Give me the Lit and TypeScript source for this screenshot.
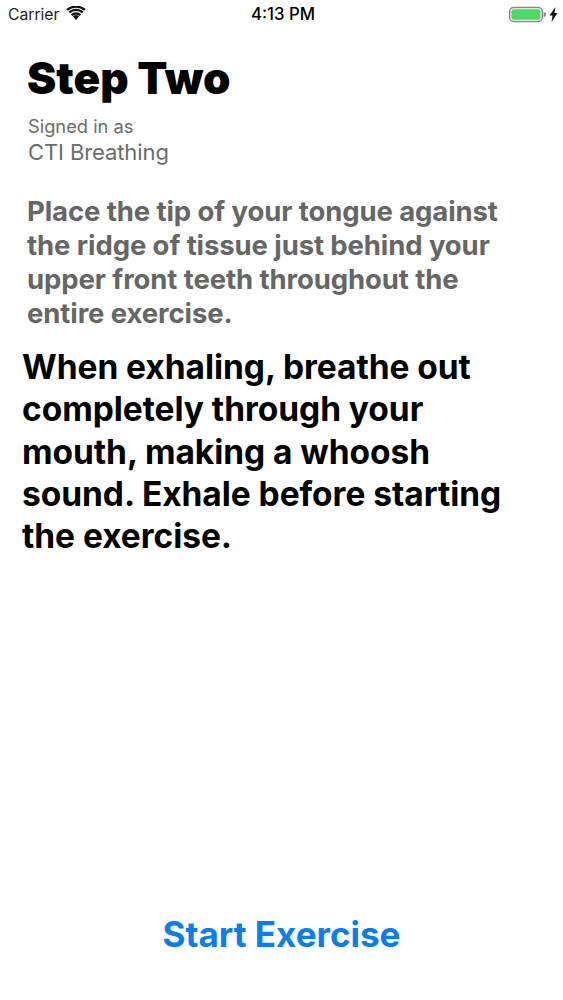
import { LitElement, html, css } from "lit";
import { customElement } from "lit/decorators.js";

@customElement("app-root")
export class AppRoot extends LitElement {
  static styles = css`
    :host { display: block; width: 563px; height: 1000px; background: #fff; font-family: Inter, "Liberation Sans", sans-serif; color: #000; overflow: hidden; }
    .page { height: 1000px; display: flex; flex-direction: column; box-sizing: border-box; }
    .status { height: 28px; display: grid; grid-template-columns: 1fr auto 1fr; align-items: center; padding: 0 5px 0 8px; font-size: 15.700px; }
    .left { display: flex; align-items: center; gap: 7px; color: #222; }
    .time { font-weight: 500; font-size: 16.800px; }
    .right { display: flex; justify-content: flex-end; align-items: center; gap: 3px; }
    .wifi { margin-top: -2px; }
    .content { padding: 0 22px; flex: 1; display: flex; flex-direction: column; }
    h1 { margin: 25px 0 0 5px; font-size: 44px; line-height: 50px; font-weight: 900; letter-spacing: 0; }
    .signed { margin: 12px 0 0 6px; font-size: 18.300px; line-height: 22px; color: #6c6c6c; font-weight: 400; }
    .name { margin: 1px 0 0 6px; font-size: 22px; line-height: 28px; color: #6c6c6c; letter-spacing: -0.1px; }
    .grey { margin: 28px 0 0 5px; font-size: 27.500px; line-height: 34px; font-weight: 700; color: #666; letter-spacing: -0.1px; }
    .black { margin: 16px 0 0 0; font-size: 33.500px; line-height: 42.250px; font-weight: 700; letter-spacing: -0.05px; }
    .start { text-align: center; color: #0a7df2; font-size: 35px; line-height: 44px; font-weight: 700; margin-bottom: 44px; }
    .spacer { flex: 1; }
  `;
  render() {
    return html`<div class="page">
      <div class="status">
        <div class="left"><span>Carrier</span>
          <svg class="wifi" width="20" height="15" viewBox="0 0 20 15"><path d="M10 14l3-3.600a4.600 4.600 0 0 0-6 0zM4.800 8.200l1.500 1.800a5.800 5.800 0 0 1 7.400 0l1.500-1.800a8 8 0 0 0-10.400 0zM2.500 5.500l1.500 1.700a9.400 9.400 0 0 1 12 0l1.500-1.700a11.800 11.800 0 0 0-15 0zM.3 3l1.500 1.700a12.700 12.700 0 0 1 16.400 0L19.700 3a15.300 15.300 0 0 0-19.400 0z" fill="#111"/></svg>
        </div>
        <div class="time">4:13 PM</div>
        <div class="right">
          <svg width="37" height="17" viewBox="0 0 37 17"><rect x="0.750" y="1.500" width="32.500" height="14" rx="4" fill="none" stroke="#8a8a8a" stroke-width="1.500"/><rect x="2.500" y="3.200" width="29" height="10.600" rx="2" fill="#4cd964"/><path d="M34.500 6a2.500 2.500 0 0 1 0 5z" fill="#8a8a8a"/></svg>
          <svg width="9" height="15" viewBox="0 0 9 15"><path d="M6.500 0L0.500 8.500h3L2.500 15 8.500 6h-3z" fill="#111"/></svg>
        </div>
      </div>
      <div class="content">
        <h1>Step Two</h1>
        <div class="signed">Signed in as</div>
        <div class="name">CTI Breathing</div>
        <div class="grey">Place the tip of your tongue against<br>the ridge of tissue just behind your<br>upper front teeth throughout the<br>entire exercise.</div>
        <div class="black">When exhaling, breathe out<br>completely through your<br>mouth, making a whoosh<br>sound. Exhale before starting<br>the exercise.</div>
        <div class="spacer"></div>
        <div class="start">Start Exercise</div>
      </div>
    </div>`;
  }
}
